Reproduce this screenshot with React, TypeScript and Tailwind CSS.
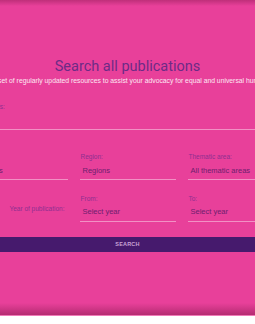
export default function App() {
  const sans = "font-['Liberation_Sans',Arial,sans-serif]";
  return (
    <div className="w-[255px] h-[324px] overflow-hidden bg-white">
      <div className="relative h-[316px] bg-[#e8409a] flex flex-col items-center overflow-hidden border-b border-[#f07ab8]">
        <div className="pointer-events-none absolute inset-x-0 top-0 h-[6px] bg-gradient-to-b from-[#bf2f7a] to-transparent" />
        <div className="pointer-events-none absolute inset-x-0 bottom-0 h-[12px] bg-gradient-to-t from-[#b52c72] to-transparent" />
        <h1 className="mt-[58px] text-[14.5px] leading-[18px] text-[#6d2b86] font-['Roboto',sans-serif] whitespace-nowrap">
          Search all publications
        </h1>
        <p className={`mt-[1px] text-[6.8px] leading-[8px] text-[#fde6f2] whitespace-nowrap ${sans}`}>
          A unique set of regularly updated resources to assist your advocacy for equal and universal human rights
        </p>
        <div className={`mt-[18px] w-[312px] shrink-0 ${sans}`}>
          <div className="pl-[3px] text-[6.5px] leading-[8px] text-[#8f2f90]">Keywords:</div>
          <div className="h-[19px] border-b border-[#f290c4]" />
        </div>
        <div className={`mt-[23px] w-[312px] shrink-0 grid grid-cols-3 gap-x-[12px] ${sans}`}>
          {[
            ["Type:", "All types"],
            ["Region:", "Regions"],
            ["Thematic area:", "All thematic areas"],
          ].map(([l, v]) => (
            <div key={l}>
              <div className="pl-[1px] text-[6.5px] leading-[8px] text-[#8f2f90]">{l}</div>
              <div className="mt-[5px] pl-[3px] pb-[3px] text-[7.5px] leading-[10px] text-[#6e1f6e] border-b border-[#f290c4]">
                {v}
              </div>
            </div>
          ))}
        </div>
        <div className={`mt-[15px] w-[312px] shrink-0 grid grid-cols-3 gap-x-[12px] ${sans}`}>
          <div className="pt-[10px] pr-[3px] text-right text-[6.5px] leading-[8px] text-[#8f2f90]">
            Year of publication:
          </div>
          {[
            ["From:", "Select year"],
            ["To:", "Select year"],
          ].map(([l, v]) => (
            <div key={l}>
              <div className="pl-[1px] text-[6.5px] leading-[8px] text-[#8f2f90]">{l}</div>
              <div className="mt-[4px] pl-[3px] pb-[4px] text-[7.5px] leading-[10px] text-[#6e1f6e] border-b border-[#f290c4]">
                {v}
              </div>
            </div>
          ))}
        </div>
        <div className={`mt-[15px] self-stretch shrink-0 h-[15px] bg-[#461a6d] flex items-center justify-center text-[5.5px] font-bold text-[#c9a3d6] tracking-[0.2px] ${sans}`}>
          SEARCH
        </div>
      </div>
    </div>
  );
}
